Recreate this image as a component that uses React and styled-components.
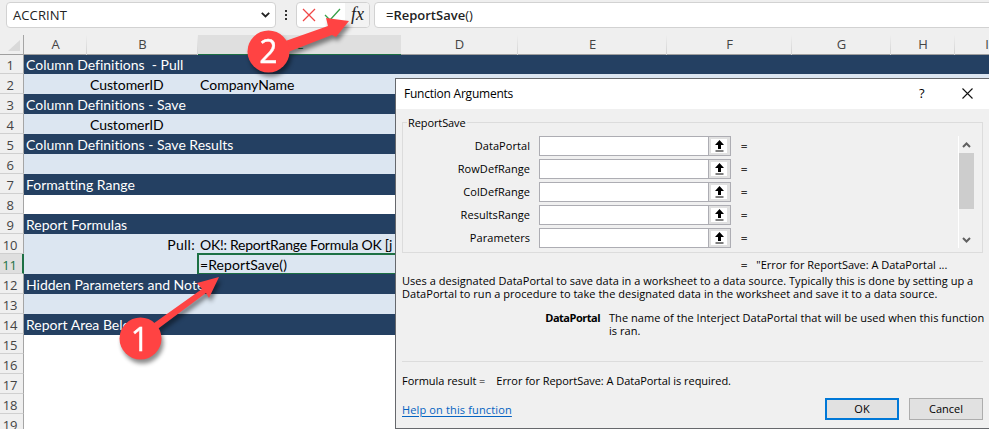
import React from 'react';
import styled, { createGlobalStyle } from 'styled-components';

const Global = createGlobalStyle`
  * { box-sizing: border-box; }
  html, body { margin: 0; overflow: hidden; }
  body { background: #efefef; }
`;

const COLS = '63px 111px 203px 117px 149px 125px 99px 64px 64px';

const Sheet = styled.div`
  position: relative;
  width: 989px;
  height: 429px;
  overflow: hidden;
  background: #efefef;
  font-family: 'Open Sans', sans-serif;
  color: #000;
`;

/* Formula bar */
const FormulaBar = styled.div`
  display: flex;
  height: 35px;
  padding: 2px 0 7px 6px;
`;
const BarBox = styled.div`
  display: flex;
  align-items: center;
  flex: none;
  height: 26px;
  background: #fff;
  border: 1px solid #d2d2d2;
  border-radius: 4px;
`;
const NameBox = styled(BarBox)`
  width: 270px;
  justify-content: space-between;
  padding: 0 5px 0 6px;
  font-size: 13px;
  line-height: 24px;
  letter-spacing: 0.1px;
  color: #222;
`;
const Dots = styled.svg`
  flex: none;
  width: 20px;
  height: 26px;
`;
const Commands = styled(BarBox)`
  width: 74px;
  overflow: hidden;
`;
const FormulaBox = styled(BarBox)`
  width: 625px;
  margin-left: 4px;
  padding-left: 11px;
  font-size: 13px;
  color: #222;
  white-space: pre;
  b { font-weight: 600; }
`;

/* Grid */
const HeaderRow = styled.div`
  display: flex;
  height: 20px;
  border-bottom: 1px solid #9f9f9f;
`;
const Corner = styled.div`
  flex: none;
  display: flex;
  width: 24px;
  height: 20px;
  border-right: 1px solid #a5a5a5;
`;
const Columns = styled.div`
  display: grid;
  grid-template-columns: ${COLS};
  height: 20px;
`;
const ColumnLabel = styled.div`
  text-align: center;
  font-size: 13px;
  line-height: 19px;
  color: ${(p) => (p.$active ? '#217346' : '#444')};
  background: ${(p) => (p.$active ? '#dfdfdf' : 'linear-gradient(#efefef, #cfcfcf) right / 1px 100% no-repeat')};
  border-bottom: ${(p) => (p.$active ? '2px solid #1d7044' : '0')};
`;
const Row = styled.div`
  display: flex;
  height: ${(p) => p.$h}px;
`;
const RowLabel = styled.div`
  flex: none;
  width: 24px;
  padding-right: 3px;
  text-align: center;
  font-size: 13px;
  line-height: ${(p) => (p.$first ? 20 : 22)}px;
  letter-spacing: -0.3px;
  color: ${(p) => (p.$active ? '#217346' : '#444')};
  background: ${(p) => (p.$active ? '#dfdfdf' : '#efefef')};
  border-right: ${(p) => (p.$active ? '2px solid #1d7044' : '1px solid #a5a5a5')};
  border-bottom: 1px solid #cfcfcf;
`;
const TONES = { dark: '#244062', light: '#dce6f1', blank: '#fff' };
const Cells = styled.div`
  display: grid;
  grid-template-columns: ${COLS};
  margin-top: ${(p) => (p.$inset ? 1 : 0)}px;
  margin-bottom: ${(p) => (p.$tall ? -1 : 0)}px;
  background: ${(p) => TONES[p.$tone]};
  color: ${(p) => (p.$tone === 'dark' ? '#fff' : '#000')};
`;
const Cell = styled.div`
  grid-column: ${(p) => p.$col};
  grid-row: 1;
  padding: ${(p) => (p.$first ? 0 : 1)}px 3px 0 ${(p) => (p.$col === 2 ? 3 : 2)}px;
  font: 14px/20px Lato, 'Open Sans', sans-serif;
  font-variant-ligatures: none;
  letter-spacing: ${(p) => p.$track || 0}px;
  text-align: ${(p) => (p.$right ? 'right' : 'left')};
  white-space: pre;
  height: 20px;
`;
const ActiveCell = styled(Cell)`
  margin: -1px -1px 0;
  height: 22px;
  padding-left: 1px;
  line-height: 18px;
  border: 2px solid #1d7044;
`;

/* Dialog */
const Dialog = styled.section`
  position: absolute;
  left: 395px;
  top: 78px;
  width: 620px;
  height: 351px;
  display: flex;
  flex-direction: column;
  background: #f0f0f0;
  border: 1px solid #66686c;
  font-size: 11px;
  line-height: 13px;
  white-space: pre;
`;
const TitleBar = styled.header`
  display: flex;
  align-items: center;
  height: 30px;
  padding: 0 0 1px 8px;
  background: #fff;
  font-size: 12px;
  letter-spacing: -0.23px;
`;
const TitleText = styled.span`
  width: 515px;
`;
const HelpMark = styled.span`
  width: 43px;
  font-size: 13px;
`;
const Group = styled.fieldset`
  display: flex;
  justify-content: space-between;
  width: 581px;
  height: 137px;
  margin: 7px 0 0 6px;
  padding: 7px 8px 0 0;
  border: 1px solid #dcdcdc;
  min-width: 0;
`;
const Legend = styled.legend`
  margin-left: 4px;
  padding: 0 1px;
  height: 13px;
  letter-spacing: -0.1px;
`;
const Fields = styled.div`
  display: flex;
  flex-direction: column;
  gap: 3px;
`;
const Field = styled.label`
  display: flex;
  align-items: center;
  height: 20px;
`;
const FieldName = styled.span`
  width: 127px;
  margin-right: 9px;
  padding-bottom: 2px;
  text-align: right;
  letter-spacing: 0.06px;
`;
const FieldBox = styled.span`
  display: flex;
  width: 192px;
  height: 20px;
  margin-right: 10px;
  background: #fff;
  border: 1px solid #adadb3;
  justify-content: flex-end;
`;
const Equals = styled.span`
  height: 14px;
  -webkit-text-stroke: 0.3px #000;
`;
const PickButton = styled.span`
  display: flex;
  width: 21px;
  height: 18px;
  background: #fff;
  border: 2px solid #e1e1e1;
  border-width: 2px 3px 2px 2px;
  outline: 1px solid #adadb3;
  svg { display: block; margin: 0 0 0 2px; }
`;
const Scrollbar = styled.div`
  display: flex;
  flex-direction: column;
  width: 16px;
  height: 112px;
  border-left: 1px solid #fff;
`;
const Thumb = styled.div`
  height: 56px;
  background: #cdcdcd;
`;
const Preview = styled.div`
  display: flex;
  gap: 9px;
  height: 13px;
  margin: 5px 0 0 345px;
  letter-spacing: -0.01px;
`;
const Description = styled.p`
  margin: 3px 0 0 6px;
  letter-spacing: 0.03px;
`;
const Argument = styled.div`
  display: flex;
  margin: 11px 0 0 6px;
  letter-spacing: 0.05px;
`;
const ArgumentName = styled.strong`
  width: 198px;
  margin-right: 9px;
  text-align: right;
  letter-spacing: -0.5px;
`;
const Divider = styled.hr`
  width: 581px;
  height: 1px;
  margin: 24px 0 0 6px;
  border: 0;
  background: #dcdcdc;
`;
const Result = styled.div`
  display: flex;
  gap: 11px;
  margin: 12px 0 0 6px;
  letter-spacing: -0.04px;
`;
const Footer = styled.footer`
  display: flex;
  align-items: flex-start;
  margin: 11px 0 0 6px;
`;
const HelpLink = styled.a`
  width: 423px;
  margin-top: 5px;
  color: #0563c1;
  letter-spacing: 0.14px;
  text-decoration: underline;
  text-underline-offset: 2px;
`;
const Button = styled.button`
  width: 74px;
  height: 22px;
  margin-right: 10px;
  padding: 0;
  background: #e1e1e1;
  border: ${(p) => (p.$primary ? '2px solid #0078d7' : '1px solid #adadad')};
  font: 11px/16px 'Open Sans', sans-serif;
  color: #000;
`;

const Callouts = styled.svg`
  position: absolute;
  left: 0;
  top: 0;
  filter: drop-shadow(2px 4px 2px rgba(0, 0, 0, 0.45));
`;
const CalloutNumber = styled.text`
  font: 32px 'Open Sans', sans-serif;
  fill: #fff;
  stroke: #fff;
  stroke-width: 0.4;
  text-anchor: middle;
`;

const LETTERS = ['A', 'B', 'C', 'D', 'E', 'F', 'G', 'H', 'I'];
const ROWS = [
  { tone: 'dark', h: 19, cells: [{ col: 1, text: 'Column Definitions  - Pull' }] },
  { tone: 'light', cells: [{ col: 2, text: 'CustomerID', track: -0.08 }, { col: 3, text: 'CompanyName' }] },
  { tone: 'dark', cells: [{ col: 1, text: 'Column Definitions - Save' }] },
  { tone: 'light', cells: [{ col: 2, text: 'CustomerID', track: -0.08 }] },
  { tone: 'dark', cells: [{ col: 1, text: 'Column Definitions - Save Results' }] },
  { tone: 'light', cells: [] },
  { tone: 'dark', tall: true, cells: [{ col: 1, text: 'Formatting Range' }] },
  { tone: 'blank', inset: true, cells: [] },
  { tone: 'dark', cells: [{ col: 1, text: 'Report Formulas' }] },
  { tone: 'light', cells: [{ col: 2, text: 'Pull:', track: 0.3, right: true }, { col: 3, text: 'OK!: ReportRange Formula OK [j', track: -0.26 }] },
  { tone: 'light', active: true, cells: [{ col: 3, text: '=ReportSave()', track: 0.08 }] },
  { tone: 'dark', cells: [{ col: 1, text: 'Hidden Parameters and Notes' }] },
  { tone: 'light', cells: [] },
  { tone: 'dark', tall: true, cells: [{ col: 1, text: 'Report Area Below' }] },
  { tone: 'blank', inset: true, cells: [] },
  ...Array.from({ length: 4 }, () => ({ tone: 'blank', cells: [] })),
];
const ARGS = ['DataPortal', 'RowDefRange', 'ColDefRange', 'ResultsRange', 'Parameters'];

const Chevron = ({ up }) => (
  <svg width="15" height="17" viewBox="0 0 15 17" fill="none" stroke="#606060" strokeWidth="2">
    <path d={up ? 'M4 11 7.5 7.5 11 11' : 'M4 7 7.5 10.5 11 7'} />
  </svg>
);

export default function App() {
  return (
    <Sheet>
      <Global />
      <FormulaBar>
        <NameBox>
          ACCRINT
          <svg width="9" height="6" fill="none" stroke="#222" strokeWidth="1.8">
            <path d="M.8.8 4.5 4.500 8.200.8" />
          </svg>
        </NameBox>
        <Dots viewBox="0 0 20 26" fill="#333">
          <path d="M9 8h2v2H9zM9 12h2v2H9zM9 16h2v2H9z" />
        </Dots>
        <Commands>
          <svg width="72" height="24" viewBox="0 0 72 24" fill="none">
            <path d="M48 0h24v24H48z" fill="#f3f3f3" />
            <path d="m6 6 12 12M18 6 6 18" stroke="#f04747" strokeWidth="1.3" />
            <path d="m28 12 5 5L43 6" stroke="#39a04a" strokeWidth="1.3" />
            <text x="54" y="17" fill="#222" fontFamily="Liberation Serif, serif" fontStyle="italic" fontSize="18">fx</text>
          </svg>
        </Commands>
        <FormulaBox>=<b>ReportSave</b>()</FormulaBox>
      </FormulaBar>
      <HeaderRow>
        <Corner>
          <svg width="23" height="19"><path d="M20 5v11H8z" fill="#d9d9d9" /></svg>
        </Corner>
        <Columns>
          {LETTERS.map((l) => <ColumnLabel key={l} $active={l === 'C'}>{l}</ColumnLabel>)}
        </Columns>
      </HeaderRow>
      {ROWS.map((r, i) => (
        <Row key={i} $h={r.h || 20}>
          <RowLabel $active={r.active} $first={i === 0}>{i + 1}</RowLabel>
          <Cells $tone={r.tone} $tall={r.tall} $inset={r.inset}>
            {r.cells.map((c) => {
              const Kind = r.active ? ActiveCell : Cell;
              return <Kind key={c.col} $first={i === 0} $col={c.col} $track={c.track} $right={c.right}>{c.text}</Kind>;
            })}
          </Cells>
        </Row>
      ))}

      <Dialog>
        <TitleBar>
          <TitleText>Function Arguments</TitleText>
          <HelpMark>?</HelpMark>
          <svg width="11" height="11" stroke="#111" strokeWidth="1.1"><path d="m.5.5 10 10M10.500.5l-10 10" /></svg>
        </TitleBar>
        <Group>
          <Legend>ReportSave</Legend>
          <Fields>
            {ARGS.map((a) => (
              <Field key={a}>
                <FieldName>{a}</FieldName>
                <FieldBox>
                  <PickButton>
                    <svg width="13" height="14" viewBox="0 0 13 14">
                      <path d="M6.500 1 11 6H8v4H5V6H2zM2.500 11.500h8v1h-8z" />
                    </svg>
                  </PickButton>
                </FieldBox>
                <Equals>=</Equals>
              </Field>
            ))}
          </Fields>
          <Scrollbar>
            <Chevron up />
            <Thumb />
            <svg width="15" height="22" />
            <Chevron />
          </Scrollbar>
        </Group>
        <Preview><Equals>=</Equals><span>"Error for ReportSave: A DataPortal ...</span></Preview>
        <Description>
          Uses a designated DataPortal to save data in a worksheet to a data source. Typically this is done by setting up a{'\n'}
          DataPortal to run a procedure to take the designated data in the worksheet and save it to a data source.
        </Description>
        <Argument>
          <ArgumentName>DataPortal</ArgumentName>
          <span>The name of the Interject DataPortal that will be used when this function{'\n'}is ran.</span>
        </Argument>
        <Divider />
        <Result><span>Formula result =</span><span>Error for ReportSave: A DataPortal is required.</span></Result>
        <Footer>
          <HelpLink>Help on this function</HelpLink>
          <Button $primary>OK</Button>
          <Button>Cancel</Button>
        </Footer>
      </Dialog>

      <Callouts width="989" height="429" viewBox="0 0 989 429">
        <g fill="#ff4343">
          <path d="M150 326 202 289 197 283 219 277 209 298 206 293 155 331z" />
          <circle cx="140.500" cy="338.500" r="21" />
          <path d="M284 41.500 328 26 326 18 349 21 336 37 332 35 288 52z" />
          <circle cx="268.500" cy="51.500" r="21" />
        </g>
        <CalloutNumber x="140" y="350.500">1</CalloutNumber>
        <CalloutNumber x="268.500" y="63">2</CalloutNumber>
      </Callouts>
    </Sheet>
  );
}
